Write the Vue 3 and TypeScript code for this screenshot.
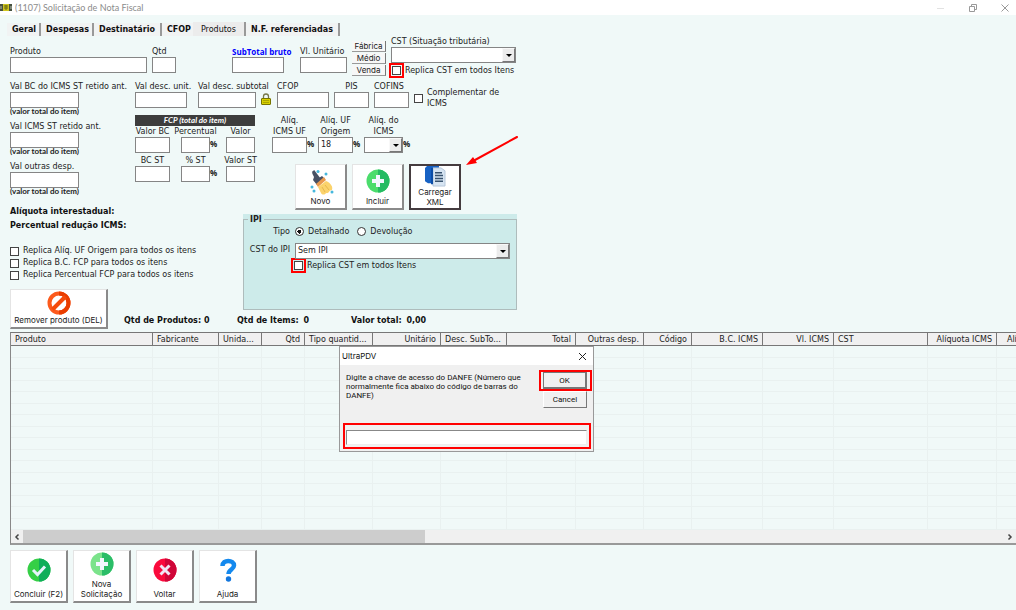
<script setup lang="ts">
import { ref } from 'vue'

interface Column {
  title: string
  width: number
  right?: boolean
}

const tabs = ['Geral', 'Despesas', 'Destinatário', 'CFOP', 'Produtos', 'N.F. referenciadas']
const activeTab = ref('Produtos')

const columns: Column[] = [
  { title: 'Produto', width: 142 },
  { title: 'Fabricante', width: 66 },
  { title: 'Unida...', width: 43 },
  { title: 'Qtd', width: 43, right: true },
  { title: 'Tipo quantid...', width: 68 },
  { title: 'Unitário', width: 68, right: true },
  { title: 'Desc. SubTo...', width: 66 },
  { title: 'Total', width: 69, right: true },
  { title: 'Outras desp.', width: 68, right: true },
  { title: 'Código', width: 48, right: true },
  { title: 'B.C. ICMS', width: 71, right: true },
  { title: 'Vl. ICMS', width: 71, right: true },
  { title: 'CST', width: 94 },
  { title: 'Alíquota ICMS', width: 69, right: true },
  { title: 'Alíquota IPI', width: 60, right: true },
]
const rowCount = 16

const retained = [
  { id: 'bc-st', label: 'Val BC do ICMS ST retido ant.' },
  { id: 'icms-st', label: 'Val ICMS ST retido ant.' },
  { id: 'outras', label: 'Val outras desp.' },
]
const replicas = [
  'Replica Alíq. UF Origem para todos os itens',
  'Replica B.C. FCP para todos os itens',
  'Replica Percentual FCP para todos os itens',
]
const fcp = [
  { id: 'f1', label: 'Valor BC', pct: false },
  { id: 'f2', label: 'Percentual', pct: true },
  { id: 'f3', label: 'Valor', pct: false },
  { id: 'f4', label: 'BC ST', pct: false },
  { id: 'f5', label: '% ST', pct: true },
  { id: 'f6', label: 'Valor ST', pct: false },
]
const origem = ref('18')
const tipo = ref('detalhado')
const chave = ref('')
</script>

<template>
  <div class="window">
    <header class="titlebar">
      <svg class="app-icon" width="13" height="9" viewBox="0 0 13 9">
        <rect x="0" y="1" width="12" height="7" fill="#46503f" />
        <rect x="3" y="1" width="6" height="7" fill="#cfc520" />
        <path d="M4 3h4M4 5h4M6 2v5" stroke="#6b6a10" fill="none" />
        <path d="M1 3v3M11 3v3" stroke="#b9bfb0" />
      </svg>
      <span class="caption">(1107) Solicitação de Nota Fiscal</span>
      <div class="sys">
        <button type="button" aria-label="Minimizar"><svg width="10" height="10"><path d="M1 5.500h7" stroke="#e2e2e2" /></svg></button>
        <button type="button" aria-label="Restaurar"><svg width="10" height="10" fill="none" stroke="#999"><path d="M1.500 3.500h5v5h-5zM3.500 3.500v-2h5v5h-2" /></svg></button>
        <button type="button" aria-label="Fechar"><svg width="10" height="10" stroke="#999"><path d="M1.500 1.500l7 7M8.500 1.500l-7 7" /></svg></button>
      </div>
    </header>

    <nav class="tabs">
      <button
        v-for="t in tabs"
        :key="t"
        type="button"
        class="tab"
        :class="{ active: t === activeTab }"
        @click="activeTab = t"
      >{{ t }}</button>
    </nav>

    <main>
      <section class="top">
        <div class="field w137"><label for="produto">Produto</label><input id="produto" type="text" /></div>
        <div class="field qtd"><label for="qtd">Qtd</label><input id="qtd" type="text" /></div>
        <div class="field w52"><label for="sub" class="blue">SubTotal bruto</label><input id="sub" type="text" /></div>
        <div class="field unit"><label for="unit">Vl. Unitário</label><input id="unit" type="text" /></div>
        <div class="prices">
          <button type="button">Fábrica</button>
          <button type="button">Médio</button>
          <button type="button">Venda</button>
        </div>
        <div class="cst">
          <label for="cst">CST (Situação tributária)</label>
          <div class="combo"><select id="cst"><option></option></select></div>
          <label class="check"><span class="mark"><input type="checkbox" /></span>Replica CST em todos Itens</label>
        </div>
      </section>

      <div class="body">
        <div class="left">
          <div v-for="r in retained" :key="r.id" class="field retained">
            <label :for="r.id">{{ r.label }}</label>
            <input :id="r.id" type="text" />
            <small>(valor total do item)</small>
          </div>
          <p class="strong first">Alíquota interestadual:</p>
          <p class="strong">Percentual redução ICMS:</p>
          <div class="replicas">
            <label v-for="r in replicas" :key="r"><input type="checkbox" />{{ r }}</label>
          </div>
          <button type="button" class="tile remove">
            <svg width="24" height="24" viewBox="0 0 24 24" fill="none" stroke-width="4">
              <circle cx="12" cy="12" r="9.500" stroke="#fc5a1c" />
              <path d="M12 2.500a9.500 9.500 0 0 1 0 19" stroke="#e93d00" />
              <path d="M18.500 5.500l-13 13" stroke="#f54b0b" />
            </svg>
            Remover produto (DEL)
          </button>
        </div>

        <div class="right">
          <div class="row values">
            <div class="field w52"><label for="du">Val desc. unit.</label><input id="du" type="text" /></div>
            <div class="field ds"><label for="ds">Val desc. subtotal</label><input id="ds" type="text" /></div>
            <svg class="lock" width="10" height="12" viewBox="0 0 10 12">
              <path d="M2.500 6V3.500a2.500 2.500 0 0 1 5 0V6" fill="none" stroke="#77794a" stroke-width="1.300" />
              <rect x="0.500" y="5.500" width="9" height="6" rx="0.500" fill="#d8d000" stroke="#777400" />
              <path d="M2 7.500h6M2 9.500h6" stroke="#aaa500" />
            </svg>
            <div class="field w52"><label for="cfop">CFOP</label><input id="cfop" type="text" /></div>
            <div class="field w35 center"><label for="pis">PIS</label><input id="pis" type="text" /></div>
            <div class="field w35"><label for="cofins">COFINS</label><input id="cofins" type="text" /></div>
            <label class="compl"><input type="checkbox" /><span>Complementar de<br />ICMS</span></label>
          </div>

          <div class="row second">
            <div class="fcp">
              <h2>FCP (total do item)</h2>
              <div class="fcp-grid">
                <div v-for="f in fcp" :key="f.id" class="field center">
                  <label :for="f.id">{{ f.label }}</label>
                  <span class="ctl"><input :id="f.id" type="text" /><b v-if="f.pct">%</b></span>
                </div>
              </div>
            </div>
            <div class="rates">
              <div class="row aliqs">
                <div class="field center w35"><label for="a1">Alíq.<br />ICMS UF</label><span class="ctl"><input id="a1" type="text" /><b>%</b></span></div>
                <div class="field center w35"><label for="a2">Alíq. UF<br />Origem</label><span class="ctl"><input id="a2" v-model="origem" type="text" /><b>%</b></span></div>
                <div class="field center w39"><label for="a3">Alíq. do<br />ICMS</label><span class="ctl"><span class="combo"><select id="a3"><option></option></select></span><b>%</b></span></div>
              </div>
              <div class="row actions">
                <button type="button" class="tile">
                  <svg width="26" height="26" viewBox="0 0 26 26">
                    <path d="M4 3l3 1 1 3 3 1 3-2 3 3-8 6-4-5 1-3z" fill="#475064" />
                    <path d="M5 1l6 8" stroke="#475064" stroke-width="3" />
                    <path d="M8 14l8-7 2 3-8 7z" fill="#e99a4e" />
                    <path d="M10 17l8-6c5 2 7 6 6 9-3 0-3 4-6 3-1 2-4 2-5 0z" fill="#fbd36c" />
                    <path d="M14 17l3 5M17 15l4 5" stroke="#e6b84e" />
                    <circle cx="10" cy="1.500" r="1.500" fill="#45b7dd" /><circle cx="18" cy="4" r="1.500" fill="#45b7dd" /><circle cx="4" cy="17" r="1.500" fill="#45b7dd" /><circle cx="6" cy="21" r="1.500" fill="#45b7dd" /><circle cx="24" cy="22" r="1.500" fill="#45b7dd" />
                  </svg>
                  Novo
                </button>
                <button type="button" class="tile">
                  <svg width="24" height="27" viewBox="0 0 24 27"><circle cx="12" cy="12" r="11.500" fill="#4bdc6c" /><path d="M12 .5a11.500 11.500 0 0 1 0 23z" fill="#25bb63" /><path d="M12 6v12M6 12h12" stroke="#f2f7ff" stroke-width="4" /></svg>
                  Incluir
                </button>
                <button type="button" class="tile xml">
                  <svg width="22" height="21" viewBox="0 0 22 22" preserveAspectRatio="none"><path d="M3 0h12v18H4l-3-2V2z" fill="#1762c4" /><path d="M9 2h8l4 3v16H9z" fill="#d6e4f2" stroke="#b4c6d9" /><path d="M8 2v17" stroke="#0c4da6" stroke-width="2" /><path d="M11 7h7M11 10h8M11 13h8M11 16h8" stroke="#38526e" stroke-width="1.500" /></svg>
                  Carregar<br />XML
                </button>
              </div>
            </div>
          </div>

          <div class="ipi">
            <fieldset>
              <legend>IPI</legend>
              <div class="ipi-grid">
                <span class="cap">Tipo</span>
                <div class="radios">
                  <label><input v-model="tipo" type="radio" name="tipo" value="detalhado" />Detalhado</label>
                  <label><input v-model="tipo" type="radio" name="tipo" value="devolucao" />Devolução</label>
                </div>
                <label class="cap" for="cst-ipi">CST do IPI</label>
                <div class="combo"><select id="cst-ipi"><option>Sem IPI</option></select></div>
                <label class="check"><span class="mark"><input type="checkbox" /></span>Replica CST em todos Itens</label>
              </div>
            </fieldset>
          </div>

          <div class="summary">
            <span>Qtd de Produtos: <b>0</b></span>
            <span>Qtd de Items: <b>0</b></span>
            <span>Valor total: <b>0,00</b></span>
          </div>
        </div>
      </div>

      <section class="grid">
        <div class="clip">
          <table>
            <colgroup><col v-for="c in columns" :key="c.title" :style="{ width: c.width + 'px' }" /></colgroup>
            <thead>
              <tr><th v-for="c in columns" :key="c.title" :class="{ num: c.right }">{{ c.title }}</th></tr>
            </thead>
            <tbody>
              <tr v-for="n in rowCount" :key="n"><td v-for="c in columns" :key="c.title"></td></tr>
            </tbody>
          </table>
        </div>
        <div class="scroll">
          <button type="button" aria-label="Rolar à esquerda"><svg width="6" height="8" fill="none" stroke="#444" stroke-width="1.500"><path d="M4.500 1.500L2 4l2.500 2.500" /></svg></button>
          <div class="track"><div class="thumb"></div></div>
          <button type="button" aria-label="Rolar à direita"><svg width="6" height="8" fill="none" stroke="#444" stroke-width="1.500"><path d="M1.500 1.500L4 4 1.500 6.500" /></svg></button>
        </div>
      </section>
    </main>

    <footer>
      <button type="button" class="tile">
        <svg width="24" height="28" viewBox="0 0 24 28"><circle cx="12" cy="12" r="11.500" fill="#35cf46" /><path d="M12 .5a11.500 11.500 0 0 1 0 23z" fill="#0fae5a" /><path d="M6 12l4.500 4.500L18 8.500" fill="none" stroke="#e6f3fb" stroke-width="3" /></svg>
        Concluir (F2)
      </button>
      <button type="button" class="tile">
        <svg width="24" height="24" viewBox="0 0 24 24"><circle cx="12" cy="12" r="11.500" fill="#7be38b" /><path d="M12 .5a11.500 11.500 0 0 1 0 23z" fill="#2bbd68" /><path d="M12 6v12M6 12h12" stroke="#f2f7ff" stroke-width="4" /></svg>
        Nova<br />Solicitação
      </button>
      <button type="button" class="tile">
        <svg width="24" height="28" viewBox="0 0 24 28"><circle cx="12" cy="12" r="11.500" fill="#fa0a3c" /><path d="M12 .5a11.500 11.500 0 0 1 0 23z" fill="#cf0638" /><path d="M7.500 7.500l9 9M16.500 7.500l-9 9" stroke="#f1e7f5" stroke-width="3" /></svg>
        Voltar
      </button>
      <button type="button" class="tile">
        <svg width="24" height="28" viewBox="0 0 24 28" fill="none"><path d="M6.500 8c0-7 11.500-6.500 11.500-.5 0 4-5.500 4-5.500 8.500" stroke="#1489ee" stroke-width="4.500" /><circle cx="12.500" cy="21" r="2.700" fill="#1276dd" /></svg>
        Ajuda
      </button>
    </footer>

    <svg class="arrow" width="54" height="32" viewBox="0 0 54 32"><path d="M52 1L10 24" stroke="#f00" stroke-width="2" stroke-linecap="round" /><path d="M1 29l7-8 4 6z" fill="#f00" /></svg>

    <form class="dialog" role="dialog" aria-label="UltraPDV" @submit.prevent>
      <div class="dlg-title">
        <span>UltraPDV</span>
        <button type="button" aria-label="Fechar diálogo"><svg width="9" height="9" stroke="#222"><path d="M1 1l7 7M8 1l-7 7" /></svg></button>
      </div>
      <div class="dlg-body">
        <label for="chave">Digite a chave de acesso do DANFE (Número que normalmente fica abaixo do código de barras do DANFE)</label>
        <div class="dlg-buttons">
          <span class="mark"><button type="submit" class="ok">OK</button></span>
          <button type="button">Cancel</button>
        </div>
      </div>
      <div class="mark key"><input id="chave" v-model="chave" type="text" /></div>
    </form>
  </div>
</template>

<style>
body {
  background: #f0f9f8;
}
</style>

<style scoped>
* {
  box-sizing: border-box;
}
.window {
  position: relative;
  min-height: 100vh;
  overflow: hidden;
  background: #f0f9f8;
  color: #222;
  font: 8px/11px "DejaVu Sans", Verdana, sans-serif;
}
button, input, select {
  font: inherit;
  color: inherit;
  margin: 0;
  padding: 0;
}
button {
  border: 0;
  background: none;
}
p, h2 {
  margin: 0;
}
label {
  white-space: nowrap;
}
.titlebar {
  display: flex;
  align-items: center;
  height: 15px;
  background: #fff;
}
.caption {
  flex: 1;
  padding-left: 2px;
  color: #8b8b8b;
  font: 9px/13px Lato, sans-serif;
}
.sys {
  display: flex;
  gap: 22px;
  padding-right: 6px;
}
.sys button {
  width: 10px;
  height: 10px;
}
.sys svg {
  display: block;
}
.tabs {
  display: flex;
  align-items: flex-end;
  height: 21px;
  padding: 0 7px;
}
.tab {
  height: 13px;
  padding: 0 5px;
  border-right: 2px solid #999;
  background: #f1f3f3;
  font: bold 8px/13px "DejaVu Sans", Verdana, sans-serif;
  color: #111;
}
.tab:nth-child(-n+2) {
  padding-right: 3px;
}
.tab:nth-child(4) {
  padding-right: 2px;
  border-right: 0;
}
.tab.active {
  height: 14px;
  padding: 0 8px;
  background: #ececec;
  font-weight: normal;
}
main {
  padding-left: 10px;
}
.field {
  display: flex;
  flex-direction: column;
  flex: none;
}
.field label {
  display: block;
  height: 11px;
}
.center {
  align-items: center;
  text-align: center;
}
input[type="text"] {
  width: 100%;
  height: 16px;
  padding: 0 2px;
  border: 1px solid #858585;
  border-radius: 0;
  background: #fff;
  outline: 0;
}
input[type="checkbox"] {
  appearance: none;
  flex: none;
  width: 9px;
  height: 9px;
  border: 1px solid #444;
  background: #fff;
}
.w137 { width: 137px; }
.w52 { width: 52px; }
.w39 { width: 39px; }
.w35 { width: 35px; }
.top {
  display: flex;
  height: 45px;
}
.top .field {
  padding-top: 10px;
}
.qtd {
  width: 24px;
  margin: 0 56px 0 5px;
}
.unit {
  width: 47px;
  margin: 0 5px 0 16px;
}
.field .blue {
  color: #00f;
  font: bold 8px/11px "Open Sans", sans-serif;
}
.prices {
  display: grid;
  gap: 1px;
  width: 34px;
  padding-top: 5px;
  margin-right: 5px;
  align-content: start;
  font-family: Inter, sans-serif;
}
.prices button {
  height: 11px;
  border-right: 1px solid #777;
  border-bottom: 1px solid #999;
  background: #f7f7f7;
  line-height: 10px;
}
.cst {
  width: 125px;
}
.cst > label:first-child {
  display: block;
  height: 11px;
  line-height: 11px;
}
.combo {
  position: relative;
  display: block;
  width: 100%;
  height: 16px;
}
.combo select {
  display: block;
  width: 100%;
  height: 100%;
  padding: 0 2px;
  appearance: none;
  border: 1px solid #858585;
  border-radius: 0;
  background: #fff;
}
.combo::before {
  content: "";
  position: absolute;
  right: 1px;
  top: 1px;
  bottom: 1px;
  width: 11px;
  border: 1px solid #f8f8f8;
  border-right-color: #777;
  border-bottom-color: #777;
  background: #ececec;
  pointer-events: none;
}
.combo::after {
  content: "";
  position: absolute;
  right: 4px;
  top: 7px;
  border: 3px solid transparent;
  border-top-color: #000;
  border-bottom: 0;
  pointer-events: none;
}
.check {
  display: flex;
  align-items: center;
  gap: 1px;
  height: 15px;
  margin-left: -2px;
}
.mark {
  display: flex;
  border: 2px solid #f00;
}
.check .mark {
  padding: 1px;
}
.body {
  display: flex;
  height: 251px;
}
.left {
  width: 114px;
  flex: none;
}
.right {
  display: flex;
  flex-direction: column;
  flex: none;
}
.retained {
  height: 40px;
}
.retained input {
  width: 69px;
}
small {
  font: bold 8px/7px Lato, sans-serif;
  white-space: nowrap;
}
.strong {
  height: 14px;
  font: bold 8px/14px "DejaVu Sans", Verdana, sans-serif;
  white-space: nowrap;
  color: #111;
}
.first {
  margin-top: 4px;
}
.replicas {
  display: grid;
  gap: 2px;
  margin-top: 13px;
}
.replicas label {
  display: flex;
  align-items: center;
  gap: 4px;
  height: 10px;
  line-height: 10px;
}
.tile {
  display: flex;
  flex-direction: column;
  align-items: center;
  justify-content: flex-end;
  width: 52px;
  height: 46px;
  padding-bottom: 2px;
  border: 1px solid #e4e4e4;
  border-right: 2px solid #8a8a8a;
  border-bottom: 2px solid #8a8a8a;
  background: #fff;
  font-family: Inter, sans-serif;
  line-height: 10px;
  white-space: nowrap;
}
.tile svg {
  flex: none;
}
.remove {
  width: 98px;
  height: 40px;
  margin-top: 9px;
}
.row {
  display: flex;
}
.values, .second {
  padding-left: 11px;
}
.values {
  height: 34px;
}
.ds {
  width: 58px;
  margin-left: 11px;
}
.lock {
  margin: 12px 6px 0 5px;
}
.values .w35 {
  margin-left: 5px;
}
.compl {
  display: flex;
  gap: 4px;
  align-items: center;
  height: 22px;
  margin: 6px 0 0 5px;
}
.fcp {
  width: 120px;
}
.fcp h2 {
  height: 11px;
  background: #3d3d3d;
  color: #fff;
  font: italic bold 8px/11px Lato, sans-serif;
  text-align: center;
}
.fcp-grid {
  display: grid;
  grid-template-columns: 46px 45px 29px;
  row-gap: 2px;
}
.fcp-grid .field {
  width: 29px;
}
.fcp-grid .field:nth-child(3n+1) {
  width: 35px;
}
.ctl {
  display: flex;
  width: 100%;
}
.ctl input, .ctl .combo {
  flex: none;
}
.ctl b {
  font: bold 8px/14px "Open Sans", sans-serif;
}
.rates {
  padding-left: 17px;
}
.aliqs {
  gap: 11px;
}
.aliqs label {
  height: 22px;
}
.actions {
  gap: 5px;
  padding: 11px 0 0 23px;
}
.xml {
  padding-bottom: 1px;
  border: 2px solid #453c3f;
}
.ipi {
  width: 274px;
  height: 98px;
  margin: 4px 0 0 119px;
  background: #cdebea;
}
.ipi fieldset {
  height: 100%;
  min-width: 0;
  margin: 0;
  padding: 0;
  border: 1px solid #aebcbc;
}
.ipi legend {
  margin-left: 4px;
  padding: 0 2px;
  font: bold 8px/11px "DejaVu Sans", Verdana, sans-serif;
}
.ipi-grid {
  display: grid;
  grid-template-columns: 46px 215px;
  column-gap: 5px;
  grid-template-rows: 18px 15px 15px;
}
.cap {
  text-align: right;
  line-height: 13px;
}
.radios {
  display: flex;
  gap: 8px;
}
.radios label {
  display: flex;
  gap: 4px;
  height: 13px;
  align-items: center;
}
.radios input {
  appearance: none;
  width: 9px;
  height: 9px;
  border: 1px solid #333;
  border-radius: 50%;
  background: #fff;
}
.radios input:checked {
  background: radial-gradient(circle, #111 2px, #fff 2px);
}
.ipi .check {
  grid-column: 2;
  margin-left: -4px;
}
.summary {
  display: grid;
  grid-template-columns: 113px 114px auto;
  height: 22px;
  align-items: center;
  font: bold 8px/12px "DejaVu Sans", Verdana, sans-serif;
  color: #111;
}
.summary b {
  margin-left: 2px;
}
.summary span:first-child b {
  margin-left: 0;
}
.grid {
  border-left: 1px solid #888;
  border-top: 1px solid #777;
  border-bottom: 2px solid #999;
}
.clip {
  overflow: hidden;
}
table {
  width: 1046px;
  table-layout: fixed;
  border-collapse: separate;
  border-spacing: 0;
}
th {
  height: 13px;
  padding: 0 4px;
  border-right: 1px solid #777;
  border-bottom: 1px solid #777;
  background: #f0f0f0;
  font-weight: normal;
  text-align: left;
  white-space: nowrap;
  overflow: hidden;
}
th.num {
  text-align: right;
}
td {
  height: 12px;
  padding: 0;
  border-right: 1px solid #e9f1f0;
  border-bottom: 1px solid #e9f1f0;
}
tr:nth-child(even) td {
  height: 11px;
}
.scroll {
  display: flex;
  height: 13px;
  background: #f0f0f0;
}
.scroll button {
  width: 12px;
}
.scroll svg {
  display: block;
  margin: auto;
}
.track {
  flex: 1;
}
.thumb {
  width: 41%;
  height: 100%;
  background: #cdcdcd;
}
footer {
  display: flex;
  gap: 5px;
  padding: 5px 10px;
}
footer .tile {
  width: 58px;
  height: 53px;
}
footer .tile svg {
  margin-bottom: 3px;
}
.arrow {
  position: absolute;
  left: 465px;
  top: 136px;
}
.dialog {
  position: absolute;
  left: 339px;
  top: 346px;
  width: 255px;
  height: 106px;
  border: 1px solid #999;
  background: #f0f0f0;
  color: #111;
  font: 8px/9px Roboto, Arial, sans-serif;
}
.dlg-title {
  display: flex;
  justify-content: space-between;
  align-items: center;
  height: 18px;
  padding: 0 6px 0 2px;
  background: #fff;
  font: 8px/18px Inter, sans-serif;
}
.dlg-title svg {
  display: block;
}
.dlg-body {
  display: flex;
  justify-content: space-between;
  height: 58px;
  padding: 5px 1px 0 6px;
}
.dlg-body label {
  width: 178px;
  padding-top: 3px;
  white-space: normal;
}
.dlg-buttons button {
  width: 44px;
  height: 17px;
  border: 1px solid #fff;
  border-right-color: #777;
  border-bottom-color: #777;
  background: #f0f0f0;
}
.dlg-buttons > button {
  margin-left: 4px;
}
.dlg-buttons .mark {
  padding: 0 3px 0 2px;
}
.dlg-buttons .ok {
  width: 44px;
  border: 1px solid #777;
  border-right-width: 2px;
  border-bottom-width: 2px;
}
.key {
  margin: 0 2px 0 3px;
  padding: 5px 2px 2px 1px;
}
.key input[type="text"] {
  height: 15px;
  border-color: #888 #eee #eee #888;
}
</style>
